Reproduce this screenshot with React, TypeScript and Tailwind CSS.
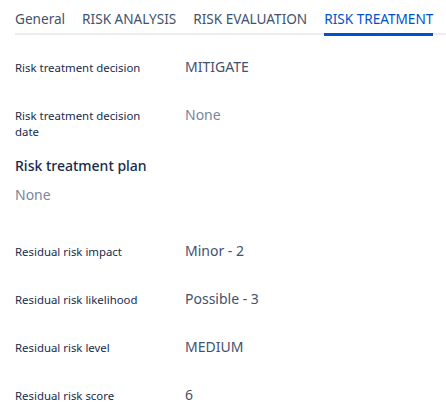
import React from "react";

const font = { fontFamily: '"Noto Sans", "Open Sans", sans-serif' };

function Row({ label, value, muted, className }: { label: React.ReactNode; value: string; muted?: boolean; className?: string }) {
  return (
    <div className={"flex items-start " + (className ?? "")}>
      <div className="w-[170px] shrink-0 pt-[3px] pr-[20px] text-[11.4px] leading-[16px] text-[#172b4d]">{label}</div>
      <div className={"text-[14px] leading-[20px] " + (muted ? "text-[#7a869a]" : "text-[#42526e]")}>{value}</div>
    </div>
  );
}

export default function App() {
  const tabs = ["General", "RISK ANALYSIS", "RISK EVALUATION", "RISK TREATMENT"];
  return (
    <div className="w-[446px] h-[420px] bg-white overflow-hidden" style={font}>
      <div className="ml-[15px] flex gap-[17px] border-b-2 border-[#ebecf0] pt-[9px]">
        {tabs.map((t, i) => (
          <div
            key={t}
            className={
              "relative pb-[4px] text-[13.6px] leading-[20px] " +
              (i === 3 ? "text-[#0052cc]" : "text-[#42526e]")
            }
          >
            {t}
            {i === 3 && <div className="absolute left-0 right-0 bottom-[-3px] h-[3px] bg-[#0052cc]" />}
          </div>
        ))}
      </div>
      <div className="px-[15px]">
        <Row className="mt-[22px]" label="Risk treatment decision" value="MITIGATE" />
        <Row className="mt-[28px]" label={<>Risk treatment decision<br />date</>} value="None" muted />
        <div className="mt-[16px] text-[14px] leading-[20px] font-medium text-[#172b4d]">Risk treatment plan</div>
        <div className="mt-[9px] text-[14px] leading-[20px] text-[#7a869a]">None</div>
        <Row className="mt-[36px]" label="Residual risk impact" value="Minor - 2" />
        <Row className="mt-[28px]" label="Residual risk likelihood" value="Possible - 3" />
        <Row className="mt-[28px]" label="Residual risk level" value="MEDIUM" />
        <Row className="mt-[28px]" label="Residual risk score" value="6" />
      </div>
    </div>
  );
}
